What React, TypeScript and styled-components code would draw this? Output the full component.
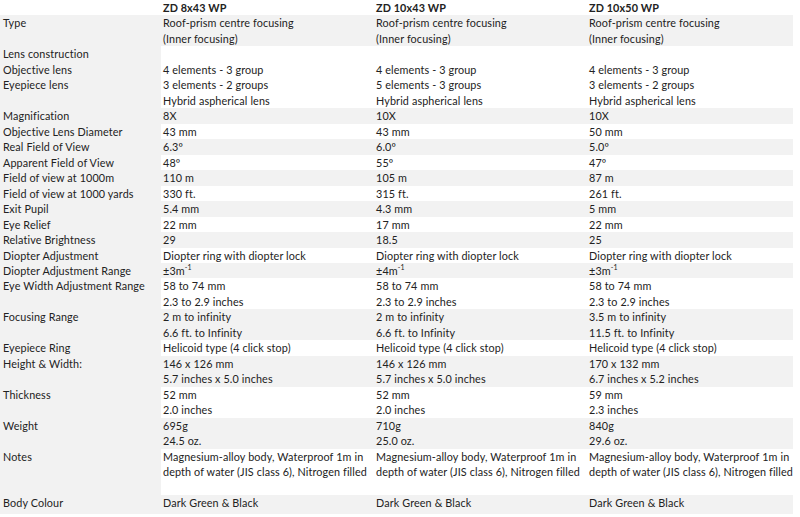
import React from "react"
import styled, { createGlobalStyle } from "styled-components"

type Row = {
	label: string[]
	values: React.ReactNode[][]
}

const GlobalStyle = createGlobalStyle`
	body {
		margin: 0;
		background: #ffffff;
		font-family: Lato, "Open Sans", sans-serif;
		color: #222222;
	}
`

const Inv = (m: string) => (
	<>
		{m}
		<sup>-1</sup>
	</>
)

const same = (lines: React.ReactNode[]) => [lines, lines, lines]

const rows: Row[] = [
	{ label: ["Type"], values: same(["Roof-prism centre focusing", "(Inner focusing)"]) },
	{
		label: ["Lens construction", "Objective lens", "Eyepiece lens", ""],
		values: [
			["", "4 elements - 3 group", "3 elements - 2 groups", "Hybrid aspherical lens"],
			["", "4 elements - 3 group", "5 elements - 3 groups", "Hybrid aspherical lens"],
			["", "4 elements - 3 group", "3 elements - 2 groups", "Hybrid aspherical lens"],
		],
	},
	{ label: ["Magnification"], values: [["8X"], ["10X"], ["10X"]] },
	{ label: ["Objective Lens Diameter"], values: [["43 mm"], ["43 mm"], ["50 mm"]] },
	{ label: ["Real Field of View"], values: [["6.3º"], ["6.0º"], ["5.0º"]] },
	{ label: ["Apparent Field of View"], values: [["48º"], ["55º"], ["47º"]] },
	{ label: ["Field of view at 1000m"], values: [["110 m"], ["105 m"], ["87 m"]] },
	{ label: ["Field of view at 1000 yards"], values: [["330 ft."], ["315 ft."], ["261 ft."]] },
	{ label: ["Exit Pupil"], values: [["5.4 mm"], ["4.3 mm"], ["5 mm"]] },
	{ label: ["Eye Relief"], values: [["22 mm"], ["17 mm"], ["22 mm"]] },
	{ label: ["Relative Brightness"], values: [["29"], ["18.5"], ["25"]] },
	{ label: ["Diopter Adjustment"], values: same(["Diopter ring with diopter lock"]) },
	{ label: ["Diopter Adjustment Range"], values: [[Inv("±3m")], [Inv("±4m")], [Inv("±3m")]] },
	{ label: ["Eye Width Adjustment Range"], values: same(["58 to 74 mm", "2.3 to 2.9 inches"]) },
	{
		label: ["Focusing Range"],
		values: [
			["2 m to infinity", "6.6 ft. to Infinity"],
			["2 m to infinity", "6.6 ft. to Infinity"],
			["3.5 m to infinity", "11.5 ft. to Infinity"],
		],
	},
	{ label: ["Eyepiece Ring"], values: same(["Helicoid type (4 click stop)"]) },
	{
		label: ["Height & Width:"],
		values: [
			["146 x 126 mm", "5.7 inches x 5.0 inches"],
			["146 x 126 mm", "5.7 inches x 5.0 inches"],
			["170 x 132 mm", "6.7 inches x 5.2 inches"],
		],
	},
	{
		label: ["Thickness"],
		values: [
			["52 mm", "2.0 inches"],
			["52 mm", "2.0 inches"],
			["59 mm", "2.3 inches"],
		],
	},
	{
		label: ["Weight"],
		values: [
			["695g", "24.5 oz."],
			["710g", "25.0 oz."],
			["840g", "29.6 oz."],
		],
	},
	{
		label: ["Notes"],
		values: same([
			"Magnesium-alloy body, Waterproof 1m in",
			"depth of water (JIS class 6), Nitrogen filled",
			"",
		]),
	},
	{ label: ["Body Colour"], values: same(["Dark Green & Black"]) },
]

const App = () => {
	return (
		<>
			<GlobalStyle />
			<SpecTable>
				<RowStyled $shaded={false}>
					<HeaderCell />
					<HeaderCell>ZD 8x43 WP</HeaderCell>
					<HeaderCell>ZD 10x43 WP</HeaderCell>
					<HeaderCell>ZD 10x50 WP</HeaderCell>
				</RowStyled>
				{rows.map((row, i) => (
					<RowStyled key={i} $shaded={i % 2 === 0}>
						<LabelCell>
							{row.label.map((l, j) => (
								<Line key={j}>{l}</Line>
							))}
						</LabelCell>
						{row.values.map((lines, k) => (
							<ValueCell key={k}>
								{lines.map((l, j) => (
									<Line key={j}>{l}</Line>
								))}
							</ValueCell>
						))}
					</RowStyled>
				))}
			</SpecTable>
		</>
	)
}

const SpecTable = styled.div`
	display: flex;
	flex-direction: column;
	width: 793px;
	font-size: 10.8px;
	letter-spacing: 0.12px;
	line-height: 15.47px;
`

const RowStyled = styled.div<{ $shaded: boolean }>`
	display: grid;
	grid-template-columns: 161px 213px 213px 206px;
	background: ${(props) => (props.$shaded ? "#f2f2f2" : "#ffffff")};

	&:last-child {
		padding-bottom: 4px;
	}
`

const LabelCell = styled.div`
	background: #f2f2f2;
	padding-left: 3px;
`

const ValueCell = styled.div`
	padding-left: 2px;
	overflow: hidden;
`

const HeaderCell = styled.div`
	font-weight: 700;
	padding-left: 2px;
	background: #ffffff;
`

const Line = styled.div`
	min-height: 15.47px;
	white-space: nowrap;

	sup {
		font-size: 7px;
		line-height: 0;
		vertical-align: 5px;
	}
`

export default App
